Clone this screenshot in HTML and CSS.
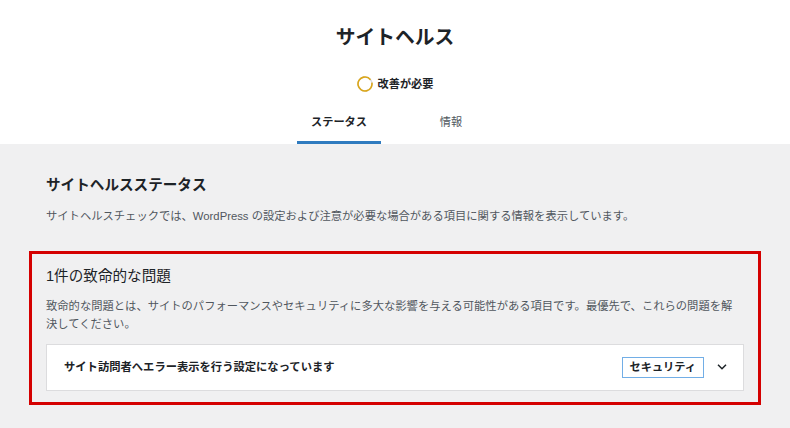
FILE: index.html
```html
<!DOCTYPE html>
<html lang="ja">
<head>
<meta charset="utf-8">
<title>サイトヘルス</title>
<link rel="stylesheet" href="styles.css">
</head>
<body>
<header class="header">
  <h1 class="title">サイトヘルス</h1>
  <div class="status">
    <svg class="ring" width="16" height="16" viewBox="0 0 16 16" aria-hidden="true">
      <circle cx="8" cy="8" r="7" fill="none" stroke="#dcdcde" stroke-width="1.6"/>
      <circle cx="8" cy="8" r="7" fill="none" stroke="#dba617" stroke-width="1.6" stroke-dasharray="40.5 3.5" transform="rotate(-12 8 8)"/>
    </svg>
    <span class="status-text">改善が必要</span>
  </div>
  <nav class="tabs">
    <a class="tab active">ステータス</a>
    <a class="tab">情報</a>
  </nav>
</header>
<main class="content">
  <h2 class="section-title">サイトヘルスステータス</h2>
  <p class="section-desc">サイトヘルスチェックでは、WordPress の設定および注意が必要な場合がある項目に関する情報を表示しています。</p>
  <section class="critical">
    <h3 class="critical-title">1件の致命的な問題</h3>
    <p class="critical-desc">致命的な問題とは、サイトのパフォーマンスやセキュリティに多大な影響を与える可能性がある項目です。最優先で、これらの問題を解決してください。</p>
    <div class="issue">
      <span class="issue-label">サイト訪問者へエラー表示を行う設定になっています</span>
      <span class="badge">セキュリティ</span>
      <svg class="chevron" width="10" height="6" viewBox="0 0 10 6" aria-hidden="true">
        <path d="M1 0.8 L5 4.8 L9 0.8" fill="none" stroke="#1d2327" stroke-width="1.5"/>
      </svg>
    </div>
  </section>
</main>
</body>
</html>
```

FILE: styles.css
```css
html, body {
  margin: 0;
  padding: 0;
}

body {
  min-height: 100vh;
  background: #f0f0f1;
  color: #1d2327;
  font-family: "Liberation Sans", "Noto Sans CJK JP", sans-serif;
}

.header {
  background: #fff;
  padding-top: 25px;
  display: flex;
  flex-direction: column;
  align-items: center;
}

.title {
  margin: 0;
  font-size: 19.8px;
  line-height: 24px;
  font-weight: 700;
  color: #1d2327;
}

.status {
  margin-top: 27px;
  display: flex;
  align-items: center;
  gap: 5px;
  height: 16px;
}

.ring {
  display: block;
}

.status-text {
  font-size: 11.2px;
  line-height: 16px;
  font-weight: 600;
  color: #1d2327;
}

.tabs {
  margin-top: 15px;
  display: grid;
  grid-template-columns: 1fr 1fr;
}

.tab {
  margin: 0 14px;
  padding: 7px 14px 13px;
  font-size: 11.2px;
  line-height: 17px;
  text-align: center;
  color: #50575e;
  text-decoration: none;
}

.tab.active {
  color: #1d2327;
  font-weight: 700;
  box-shadow: inset 0 -3px #2f7bbf;
}

.content {
  padding: 31px 46px 0;
}

.section-title {
  margin: 0;
  font-size: 14.6px;
  line-height: 20px;
  font-weight: 700;
  color: #1d2327;
}

.section-desc {
  margin: 13px 0 0;
  font-size: 11.3px;
  line-height: 17.5px;
  color: #50575e;
}

.critical {
  margin: 25px -17px 0;
  border: 3px solid #d40000;
  padding: 12.5px 14px 11px;
}

.critical-title {
  margin: 0;
  font-size: 14.6px;
  line-height: 20px;
  font-weight: 400;
  color: #1d2327;
}

.critical-desc {
  margin: 12px 0 0;
  padding-right: 6px;
  font-size: 11.3px;
  line-height: 17.5px;
  color: #50575e;
}

.issue {
  margin-top: 10.5px;
  background: #fff;
  border: 1px solid #dcdcde;
  padding: 12px 16px 12px 17px;
  display: flex;
  align-items: center;
}

.issue-label {
  flex: 1;
  font-size: 11.3px;
  line-height: 21px;
  font-weight: 700;
  color: #1d2327;
}

.badge {
  border: 1px solid #72aee6;
  padding: 0 7px;
  height: 19px;
  font-size: 11.2px;
  line-height: 19px;
  font-weight: 700;
  color: #1d2327;
}

.chevron {
  display: block;
  margin-left: 13px;
}
```
